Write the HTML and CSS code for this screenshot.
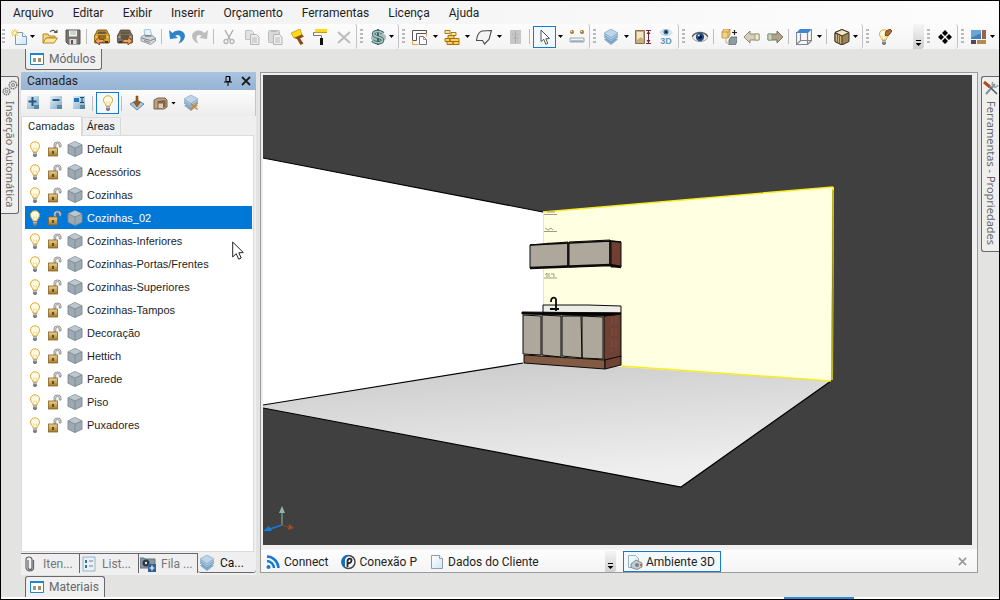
FILE: index.html
```html
<!DOCTYPE html>
<html lang="pt">
<head>
<meta charset="utf-8">
<title>Ambiente 3D</title>
<link rel="stylesheet" href="styles.css">
</head>
<body>
<svg class="sprite" aria-hidden="true">
  <defs>
    <linearGradient id="gold" x1="0" y1="0" x2="0" y2="1"><stop offset="0" stop-color="#ecd28e"/><stop offset="1" stop-color="#a67a2c"/></linearGradient>
    <linearGradient id="paper" x1="0" y1="0" x2="1" y2="1"><stop offset="0" stop-color="#fff"/><stop offset="1" stop-color="#cfe6f5"/></linearGradient>
    <linearGradient id="tile" x1="0" y1="0" x2="1" y2="1"><stop offset="0" stop-color="#e4f0f6"/><stop offset="1" stop-color="#7fa8c4"/></linearGradient>
  </defs>
  <symbol id="i-new" viewBox="0 0 16 16"><path d="M4.500 3.500h7l4 4v8h-11z" fill="url(#paper)" stroke="#7d9bb5"/><path d="M11.500 3.500v4h4" fill="#fff" stroke="#7d9bb5"/><path d="M4 0v8M0 4h8M1 1l6 6M7 1L1 7" stroke="#e8bf35"/><circle cx="4" cy="4" r="1.500" fill="#fff6b8"/></symbol>
  <symbol id="i-open" viewBox="0 0 16 16"><path d="M1 14V5h5l1 2h6v2H5z" fill="#f5d684" stroke="#b98722"/><path d="M1 14l3-5h11.500l-3.500 5z" fill="#fbe7a4" stroke="#b98722"/><path d="M8 3c2-2.500 5-2 6 1" fill="none" stroke="#555" stroke-width="1.200"/><path d="M11.500 4h4V.500z" fill="#555"/></symbol>
  <symbol id="i-save" viewBox="0 0 16 16"><path d="M1 1h14v14H3l-2-2z" fill="#77716e" stroke="#5b5553"/><path d="M4 1.500h8v6H4z" fill="#eef1ef"/><path d="M5 3h6M5 5h6" stroke="#a8b7ae"/><path d="M4.500 10h7v5h-7z" fill="#ddd"/><path d="M6 11h2v4H6z" fill="#555"/></symbol>
  <symbol id="i-car" viewBox="0 0 16 16"><path d="M3.500 1h9l2 4 1.500 2v5l-1 2H1l-1-2V7l1.500-2z" fill="currentColor" stroke="#4c3a12" stroke-width=".8"/><path d="M4.500 2.500h7L13 5H3z" fill="#6b5a38"/><path d="M4 7h8M4 9h8" stroke="#4b3b1d"/><path d="M1.500 8h2M12.500 8h2" stroke="#f8e1a0"/><path d="M2 12h3v2H2zM11 12h3v2h-3z" fill="#333"/></symbol>
  <symbol id="i-arl" viewBox="0 0 16 16"><path d="M1 12l4.500-4v2.500H10v3H5.500V16z" fill="#e8a467" stroke="#844516" stroke-width=".9"/></symbol>
  <symbol id="i-arr" viewBox="0 0 16 16"><path d="M15.500 12L11 8v2.500H6v3h5V16z" fill="#e8a467" stroke="#844516" stroke-width=".9"/></symbol>
  <symbol id="i-print" viewBox="0 0 16 16"><path d="M4 1l6-1 2 7H5z" fill="#e2f3fc" stroke="#8db5cf" stroke-width=".8"/><path d="M1 8l3-2 9 1 2.500 2v3l-5 3.500L1 12z" fill="#d5d7da" stroke="#888d93" stroke-width=".8"/><path d="M1.500 9l9 2.500 5-2M4 11.500l6 2" fill="none" stroke="#7c8187"/><path d="M5 7h6" stroke="#666"/></symbol>
  <symbol id="i-undo" viewBox="0 0 16 16"><path d="M0 1l1 9 8-1-2.800-2.200c2.500-1.800 5.800-.5 5.300 3.200-.2 2-2 4.500-2 4.500 6-2 8-8 5-11-3-2.800-8-2.500-11 .5z" fill="currentColor"/></symbol>
  <symbol id="i-cut" viewBox="0 0 16 16"><path d="M4 1l5.500 10M12 1L6.500 11" stroke="#aaa" stroke-width="1.300"/><circle cx="5" cy="12.500" r="2" fill="none" stroke="#b5b5b5" stroke-width="1.300"/><circle cx="11" cy="12.500" r="2" fill="none" stroke="#b5b5b5" stroke-width="1.300"/></symbol>
  <symbol id="i-copy" viewBox="0 0 16 16"><path d="M1.500 1.500h6l2 2v7h-8z" fill="#e3e3e3" stroke="#c0c0c0"/><path d="M6.500 5.500h6l2.500 2.500v7.500H6.500z" fill="#ececec" stroke="#b5b5b5"/><path d="M8 9h5M8 11h5M8 13h5" stroke="#bbb"/></symbol>
  <symbol id="i-paste" viewBox="0 0 16 16"><rect x="1.500" y="1.500" width="11" height="12" rx="1" fill="#d9d9d9" stroke="#bdbdbd"/><path d="M4 1h6v2H4z" fill="#bbb"/><path d="M6.500 5.500h6l2.500 2.500v7.500H6.500z" fill="#eee" stroke="#b5b5b5"/><path d="M8 9h5M8 11h5M8 13h5" stroke="#bbb"/></symbol>
  <symbol id="i-brush" viewBox="0 0 16 16"><path d="M1 4l9-4 2 6-8 3z" fill="#ffd91c" stroke="#c89c0a" stroke-width=".8"/><path d="M4 9l8-3.500 2 2-4 2 3.500 5-3 1.500-3.500-6z" fill="#8a4b12"/></symbol>
  <symbol id="i-roller" viewBox="0 0 16 16"><path d="M2 0h12v4H2z" fill="#ffd91c"/><path d="M2 3.500h12" stroke="#c79c12"/><path d="M2 3.500H.500v3h8V9" fill="none" stroke="#777"/><path d="M7 9h3v7H7z" fill="#111"/></symbol>
  <symbol id="i-x" viewBox="0 0 16 16"><path d="M2 3l12 11M14 3L2 14" stroke="#bcbcbc" stroke-width="2"/></symbol>
  <symbol id="i-dollar" viewBox="0 0 16 16"><path d="M3 5h11l2 2v3l-3 3H4l-3-3V8z" fill="#7da0a8" opacity=".65"/><path d="M13 4.500C11 2 4 1.500 3.500 5S12 7.500 12.500 11 5 14.500 2.500 11.500" fill="none" stroke="#3f636b" stroke-width="3.400"/><path d="M8 0v16" stroke="#3f636b" stroke-width="2"/><path d="M13 4.500C11 2 4 1.500 3.500 5S12 7.500 12.500 11 5 14.500 2.500 11.500" fill="none" stroke="#a5cbb8" stroke-width="1.600"/></symbol>
  <symbol id="i-walls" viewBox="0 0 16 16"><path d="M.500 1.500h14v3H4.500v7h-4z" fill="#fbfbfa" stroke="#565656"/><path d="M.500 11.500v4h6M14.500 4.500v3" fill="none" stroke="#eaa45c"/><path d="M7.500 7.500h4l3 3v5h-7z" fill="#fff" stroke="#76737c"/><path d="M11.500 7.500v3h3" fill="none" stroke="#9a98a4"/></symbol>
  <symbol id="i-bricks" viewBox="0 0 16 16"><path d="M1 1.500h5v3H1zM7 3.500h5v3H7z" fill="#fae7ac" stroke="#ad7a13"/><path d="M4 6.500h6v3H4zM1 9.500h5v3H1zM6 9.500h9v3H6zM3 12.500h6v3H3zM9 12.500h6v3H9z" fill="#f6cf67" stroke="#a8700d"/></symbol>
  <symbol id="i-poly" viewBox="0 0 16 16"><path d="M.500 11.500C1 6 3 3 6 2l9.500-.5-2.500 9-4.500 4.500-2-3.500z" fill="#f4f4f4" stroke="#4c4c4c" stroke-width="1.100"/></symbol>
  <symbol id="i-panel" viewBox="0 0 16 16"><path d="M2 1h11v14H2z" fill="#c7c7c7"/><path d="M7.500 2v12M5 5l-1 1M10 5v1M5 9h5" stroke="#a9a9a9"/></symbol>
  <symbol id="i-cursor" viewBox="0 0 16 16"><path d="M4 1v11.500l2.800-2.200 2 5 2-1-2-4.500 3.700-.3z" fill="#fff" stroke="#555"/></symbol>
  <symbol id="i-ruler" viewBox="0 0 16 16"><path d="M1 9h14v4H1z" fill="#eef3f5" stroke="#9ba8b3"/><path d="M3 11v2M5 11v2M7 11v2M9 11v2M11 11v2M13 11v2" stroke="#7c8b97"/><circle cx="3" cy="3" r="2" fill="#a87429"/><circle cx="13" cy="3" r="2" fill="#a87429"/><circle cx="2.500" cy="2.500" r=".8" fill="#ffe6a6"/><circle cx="12.500" cy="2.500" r=".8" fill="#ffe6a6"/></symbol>
  <symbol id="i-layers" viewBox="0 0 16 16"><path d="M8 7l7 3.500L8 16l-7-5.500z" fill="#83a9cb"/><path d="M8 4.500L15 8l-7 5L1 8z" fill="#9fc0dc" stroke="#668fae" stroke-width=".6"/><path d="M8 2l7 4-7 5-7-5z" fill="#abc9e2" stroke="#6d96b5" stroke-width=".6"/><path d="M8 0l7 4-7 4.500L1 4z" fill="#bed6e9" stroke="#769cba" stroke-width=".6"/></symbol>
  <symbol id="i-height" viewBox="0 0 16 16"><path d="M.500 1.500h9v13h-9z" fill="#c6ae7c" stroke="#88714a"/><path d="M2 3h6v7l-2-2-4 3z" fill="#f1e7c9"/><path d="M11 1.500h5M11 14.500h5M13.500 2v12" stroke="#75283c"/><path d="M11.500 5l2-3 2 3zM11.500 11l2 3 2-3z" fill="#75283c"/></symbol>
  <symbol id="i-eye" viewBox="0 0 16 16"><path d="M0 8.500C3 2.500 12.500 2 16 8.500 12 14 4 14 0 8.500z" fill="#f1f1f1" stroke="#999"/><path d="M0 8C3 2 13 2 16 8" fill="none" stroke="#666" stroke-width="1.500"/><circle cx="8" cy="8" r="4.200" fill="#27518d"/><circle cx="8" cy="8" r="2" fill="#091329"/><circle cx="6.800" cy="6.500" r="1" fill="#e4efff"/></symbol>
  <symbol id="i-boxes" viewBox="0 0 16 16"><path d="M1 3l2-3h6v6L7 9H1z" fill="#f5d284" stroke="#b48c3b" stroke-width=".8"/><path d="M1 3h6v6M7 3l2-3" fill="none" stroke="#b48c3b" stroke-width=".8"/><path d="M8 11l2-3h6v5l-2 3H8z" fill="#8d9ba4" stroke="#59646c" stroke-width=".8"/><path d="M13.500 1v5M11 3.500h5" stroke="#222" stroke-width="1.200"/><path d="M5 10v4h3" fill="none" stroke="#c2ac83"/></symbol>
  <symbol id="i-al" viewBox="0 0 16 16"><path d="M0 8l6-6v3h9v6H6v3z" fill="#d4cfb6" stroke="#858169" stroke-width=".9"/><path d="M11 5h4v6h-4z" fill="#f2edc8" stroke="#98937a" stroke-width=".8"/></symbol>
  <symbol id="i-ar" viewBox="0 0 16 16"><path d="M16 8l-6-6v3H1v6h9v3z" fill="#b0a388" stroke="#716955" stroke-width=".9"/><path d="M1 5h4v6H1z" fill="#c9d7c1" stroke="#83947e" stroke-width=".8"/></symbol>
  <symbol id="i-wire" viewBox="0 0 16 16"><path d="M.500 3.500h11v12H.500zM.500 15.500l4-4h11v-11M11.500 15.500l4-4M4.500 11.500v-7" fill="none" stroke="#858493" stroke-width="1.200"/><path d="M0 4l4-4h12l-4 4z" fill="#3d87d2"/></symbol>
  <symbol id="i-wood" viewBox="0 0 16 16"><path d="M8 .500L15 3.500v9L8 16l-7-3.500v-9z" fill="#9c8358" stroke="#3e3426"/><path d="M8 .500L15 3.500 8 7 1 3.500z" fill="#f1e5bf" stroke="#3e3426"/><path d="M1 4l7 3v9l-7-3.500z" fill="#c9b17f" stroke="#3e3426"/><path d="M3.500 6v7M5.500 7v7" stroke="#796340"/></symbol>
  <symbol id="i-bulb" viewBox="0 0 16 16"><path d="M6 11C6 9 3.500 8 3.500 5a4.500 4.200 0 0 1 9 0c0 3-2.500 4-2.500 6z" fill="#fffbe2" stroke="#dfa935"/><path d="M6.500 10V6.500L8 8l1.500-1.500V10" fill="none" stroke="#f5dc98" stroke-width=".8"/><path d="M6 11.500h4v3L9 16H7l-1-1.500z" fill="#7e7c82"/><path d="M6 12.700h4" stroke="#ddd" stroke-width=".8"/></symbol>
  <symbol id="i-pen" viewBox="0 0 16 16"><path d="M9 6l1-4 4-2 2 2-3 4-3 1z" fill="#b56a2c" stroke="#55331b" stroke-width=".8"/></symbol>
  <symbol id="i-dots" viewBox="0 0 16 16"><path d="M8 1l3 3-3 3-3-3zM8 9l3 3-3 3-3-3zM4 5l3 3-3 3-3-3zM12 5l3 3-3 3-3-3z"/></symbol>
  <symbol id="i-mats" viewBox="0 0 16 16"><path d="M0 1h10v9H0z" fill="#3d80bb"/><path d="M0 1h10v3L0 9z" fill="#69a5d6"/><path d="M11 1h4v9h-4z" fill="#98644c"/><path d="M0 11h5v4H0z" fill="#494c59"/><path d="M6 11h9v4H6z" fill="#b9884b"/></symbol>
  <symbol id="i-win" viewBox="0 0 14 14"><path d="M.500 1.500h13v11H.500z" fill="#fff" stroke="#2383d1"/><path d="M0 1h14v2H0z" fill="#2383d1"/><path d="M3 6h3v4H3z" fill="#8da08e"/><path d="M8 6h3v4H8z" fill="#a48c65"/></symbol>
  <symbol id="i-add" viewBox="0 0 16 16"><path d="M2 1h12v13H2z" fill="url(#tile)"/><path d="M7.500 2v9M3.500 6.500h8" stroke="#255984" stroke-width="2"/><path d="M9 10h5v4H9z" fill="#5b87a7"/></symbol>
  <symbol id="i-sub" viewBox="0 0 16 16"><path d="M2 1h12v13H2z" fill="url(#tile)"/><path d="M4.500 5h7" stroke="#255984" stroke-width="2"/><path d="M9 10h5v4H9z" fill="#5b87a7"/></symbol>
  <symbol id="i-ren" viewBox="0 0 16 16"><path d="M2 1h12v13H2z" fill="url(#tile)"/><path d="M3 3h5v4H3z" fill="#2675b5"/><path d="M9 2.500h4M11 2.500v5M9 7.500h4" stroke="#1c4770"/><path d="M9 10h5v4H9z" fill="#5b87a7"/></symbol>
  <symbol id="i-down" viewBox="0 0 16 16"><path d="M8 5l7 4-7 6-7-6z" fill="#a9c5d9" stroke="#638ba8"/><path d="M7 1h2v6h2.500L8 12 4.500 7H7z" fill="#a65c17" stroke="#6c3c14" stroke-width=".5"/></symbol>
  <symbol id="i-box" viewBox="0 0 16 16"><path d="M2 5l4-2h7l2 2v7l-3 2H2z" fill="#bda180" stroke="#77634d"/><path d="M5.500 6l8-1v7l-8 2z" fill="#826147"/><path d="M6.500 8.500H11V13H6.500z" fill="#d9cdb9"/></symbol>
  <symbol id="i-badx" viewBox="0 0 16 16"><path d="M7.500 8.500l7 6M14.500 8l-7 7" stroke="#d5882e" stroke-width="1.500"/></symbol>
  <symbol id="i-lock" viewBox="0 0 16 16"><path d="M7 7V3.500a3.500 2.500 0 0 1 7 0V6h-1.800V3.800a1.700 1.200 0 0 0-3.400 0V7z" fill="#ddd" stroke="#85817c" stroke-width=".8"/><rect x="1.500" y="7" width="9" height="8" fill="url(#gold)" stroke="#886323" stroke-width=".8"/><path d="M5 10h2v3H5z" fill="#634b22"/></symbol>
  <symbol id="i-cube" viewBox="0 0 16 16"><path d="M8 .500l7 3.300v8.400l-7 3.300-7-3.300V3.800z" fill="#9daab3" stroke="#7c8a94" stroke-width=".9"/><path d="M8 .800l6.500 3L8 7 1.500 3.800z" fill="#bdc7cc"/><path d="M8 7v8.500M1 3.800L8 7l7-3.200" fill="none" stroke="#7c8a94" stroke-width=".9"/></symbol>
  <symbol id="i-clip" viewBox="0 0 16 16"><path d="M6 4v7.500a2 2 0 0 0 4 0V3.500a3 2.500 0 0 0-6 0V12a4 3.500 0 0 0 7.500 1V4" fill="none" stroke="#64636a" stroke-width="1.200"/></symbol>
  <symbol id="i-list" viewBox="0 0 16 16"><path d="M2 1h12v14H2z" fill="#e6f2f8" stroke="#93b5c8"/><path d="M4 4h2v3H4zM4 9h2v3H4z" fill="#36729c"/><path d="M8 5h4M8 10h4" stroke="#8a7b72"/></symbol>
  <symbol id="i-cam" viewBox="0 0 16 16"><path d="M0 2h4l1 1h10v9H0z" fill="#87969f" stroke="#66757d"/><circle cx="6" cy="7" r="3.500" fill="#283746"/><circle cx="6" cy="7" r="1.200" fill="#f2d6d6"/><path d="M8 8h8v8H8z" fill="#315f95"/><path d="M12 9.500v5M9.500 12h5" stroke="#fff" stroke-width="1.200"/></symbol>
  <symbol id="i-rss" viewBox="0 0 16 16"><circle cx="3.500" cy="13" r="2" fill="#167bd0"/><path d="M2 7a7.500 7.500 0 0 1 7 7M2 2.500A12 12 0 0 1 13.500 14" fill="none" stroke="#167bd0" stroke-width="2.500"/></symbol>
  <symbol id="i-p" viewBox="0 0 16 16"><circle cx="8.500" cy="8" r="6.500" fill="#f7f7f7" stroke="#49474b" stroke-width="1.500"/><path d="M10 1.500C6 0 1.500 3 1.500 8c0 3 1.500 5 3.500 6V5.500C6 3 8 2 10 1.500z" fill="#136fc1"/><path d="M7.500 13V7c.500-3 4.500-3 4-0.500s-2.500 3.500-4 2" fill="none" stroke="#29282b" stroke-width="1.800"/></symbol>
  <symbol id="i-doc" viewBox="0 0 16 16"><path d="M2.500 1.500h8l3 3v10h-11z" fill="url(#paper)" stroke="#8b9fb0"/><path d="M10.500 1.500v3h3" fill="#fff" stroke="#8b9fb0"/></symbol>
  <symbol id="i-env" viewBox="0 0 16 16"><path d="M1.500 1.500h7l3 3v9h-10z" fill="url(#paper)" stroke="#8fb3cf"/><path d="M4 10l5-4 6 3v4l-5 2.500-6-2z" fill="#c8cbcd" stroke="#73787b" stroke-width=".8"/><circle cx="10" cy="11" r="2" fill="#77838a"/><path d="M13 10h2v2h-2z" fill="#c36c2b"/></symbol>
  <symbol id="i-gears" viewBox="0 0 16 16"><g fill="none" stroke="#77757a"><circle cx="11" cy="5" r="3.800" stroke-dasharray="1.500 .7" stroke-width="1.500"/><circle cx="11" cy="5" r="1.500"/><circle cx="4.500" cy="11.500" r="3.300" stroke-dasharray="1.500 .7" stroke-width="1.500"/><circle cx="4.500" cy="11.500" r="1.200"/></g></symbol>
  <symbol id="i-tools" viewBox="0 0 16 16"><path d="M3 14L12 4" stroke="#7f929f" stroke-width="2"/><path d="M10 2a3 3 0 1 0 5 3" fill="none" stroke="#8fa1ac" stroke-width="1.500"/><path d="M1 2l6 5" stroke="#a9501e" stroke-width="3"/><path d="M7 7l7 7" stroke="#4f5a61" stroke-width="1.500"/></symbol>
  <symbol id="i-pin" viewBox="0 0 10 12"><path d="M3 1.500h4v5H3zM6.500 1v6M1 7h8M5 7v4" fill="none" stroke="#000"/></symbol>
  <symbol id="i-close" viewBox="0 0 10 10"><path d="M1 1l8 8M9 1L1 9" stroke="currentColor" stroke-width="1.800"/></symbol>
</svg>

<nav class="menu">
  <a href="#">Arquivo</a><a href="#">Editar</a><a href="#">Exibir</a><a href="#">Inserir</a><a href="#">Orçamento</a><a href="#">Ferramentas</a><a href="#">Licença</a><a href="#">Ajuda</a>
</nav>

<div class="toolbar" role="toolbar" aria-label="Principal">
  <div class="group first">
    <button class="tool" aria-label="Novo"><svg><use href="#i-new"/></svg></button><button class="drop" aria-label="Mais novo"></button>
    <button class="tool" aria-label="Abrir"><svg><use href="#i-open"/></svg></button>
    <button class="tool" aria-label="Salvar"><svg><use href="#i-save"/></svg></button><i class="sep"></i>
    <button class="tool car-gold" aria-label="Importar"><svg><use href="#i-car"/><use href="#i-arl"/></svg></button>
    <button class="tool car-gray" aria-label="Exportar"><svg><use href="#i-car"/><use href="#i-arr"/></svg></button>
    <button class="tool" aria-label="Imprimir"><svg><use href="#i-print"/></svg></button><i class="sep"></i>
    <button class="tool blue" aria-label="Desfazer"><svg><use href="#i-undo"/></svg></button>
    <button class="tool gray flip" aria-label="Refazer"><svg><use href="#i-undo"/></svg></button><i class="sep"></i>
    <button class="tool" aria-label="Cortar"><svg><use href="#i-cut"/></svg></button>
    <button class="tool" aria-label="Copiar"><svg><use href="#i-copy"/></svg></button>
    <button class="tool" aria-label="Colar"><svg><use href="#i-paste"/></svg></button>
    <button class="tool" aria-label="Pincel"><svg><use href="#i-brush"/></svg></button>
    <button class="tool" aria-label="Rolo"><svg><use href="#i-roller"/></svg></button>
    <button class="tool" aria-label="Excluir"><svg><use href="#i-x"/></svg></button>
  </div>
  <div class="group">
    <button class="tool" aria-label="Preço"><svg><use href="#i-dollar"/></svg></button><button class="drop" aria-label="Mais preço"></button>
  </div>
  <div class="group">
    <button class="tool" aria-label="Paredes"><svg><use href="#i-walls"/></svg></button><button class="drop wide" aria-label="Mais paredes"></button>
    <button class="tool" aria-label="Alvenaria"><svg><use href="#i-bricks"/></svg></button><button class="drop wide" aria-label="Mais alvenaria"></button>
    <button class="tool" aria-label="Piso"><svg><use href="#i-poly"/></svg></button><button class="drop wide" aria-label="Mais piso"></button>
    <button class="tool" aria-label="Painel"><svg><use href="#i-panel"/></svg></button><i class="sep"></i>
    <button class="tool on" aria-label="Selecionar"><svg><use href="#i-cursor"/></svg></button><button class="drop wide" aria-label="Mais seleção"></button>
    <button class="tool" aria-label="Medir"><svg><use href="#i-ruler"/></svg></button>
  </div>
  <div class="group">
    <button class="tool" aria-label="Camadas"><svg><use href="#i-layers"/></svg></button><button class="drop wide" aria-label="Mais camadas"></button>
    <button class="tool" aria-label="Altura"><svg><use href="#i-height"/></svg></button>
    <button class="tool" aria-label="Vista 3D"><svg viewBox="0 0 16 16"><path d="M2 3.500c3-4.500 9-4.500 12 0-3 4-9 4-12 0z" fill="#d8e9f4" stroke="#9bb9cc" stroke-width=".6"/><circle cx="8" cy="3" r="2.500" fill="#376f9c"/><circle cx="8" cy="3" r="1" fill="#111"/><text x="8" y="15" text-anchor="middle" class="mini">3D</text></svg></button>
  </div>
  <div class="group">
    <button class="tool" aria-label="Ver"><svg><use href="#i-eye"/></svg></button><i class="sep"></i>
    <button class="tool" aria-label="Módulos"><svg><use href="#i-boxes"/></svg></button>
    <button class="tool" aria-label="Anterior"><svg><use href="#i-al"/></svg></button>
    <button class="tool" aria-label="Próximo"><svg><use href="#i-ar"/></svg></button><i class="sep"></i>
    <button class="tool" aria-label="Vista superior"><svg><use href="#i-wire"/></svg></button><button class="drop wide" aria-label="Mais vistas"></button><i class="sep"></i>
    <button class="tool" aria-label="Textura"><svg><use href="#i-wood"/></svg></button><button class="drop" aria-label="Mais texturas"></button>
  </div>
  <div class="group last-open">
    <button class="tool" aria-label="Luz"><svg><use href="#i-bulb"/><use href="#i-pen"/></svg></button>
    <button class="overflow" aria-label="Mais opções"></button>
  </div>
  <div class="group">
    <button class="tool" aria-label="Mover"><svg><use href="#i-dots"/></svg></button>
  </div>
  <div class="group fill">
    <button class="tool" aria-label="Materiais"><svg><use href="#i-mats"/></svg></button><button class="drop" aria-label="Mais materiais"></button>
  </div>
</div>

<main class="work">
  <button class="edge-tab top"><svg><use href="#i-win"/></svg>Módulos</button>
  <button class="side-tab left"><svg><use href="#i-gears"/></svg><span>Inserção Automática</span></button>

  <section class="panel">
    <header class="panel-head"><h1>Camadas</h1>
      <button aria-label="Fixar"><svg><use href="#i-pin"/></svg></button><button aria-label="Fechar"><svg><use href="#i-close"/></svg></button></header>
    <div class="panel-tools">
      <button class="tool" aria-label="Adicionar"><svg><use href="#i-add"/></svg></button>
      <button class="tool" aria-label="Remover"><svg><use href="#i-sub"/></svg></button>
      <button class="tool" aria-label="Renomear"><svg><use href="#i-ren"/></svg></button><i class="sep"></i>
      <button class="tool on" aria-label="Visível"><svg><use href="#i-bulb"/></svg></button><i class="sep"></i>
      <button class="tool" aria-label="Aplicar"><svg><use href="#i-down"/></svg></button>
      <button class="tool" aria-label="Caixa"><svg><use href="#i-box"/></svg></button><button class="drop" aria-label="Mais caixas"></button>
      <button class="tool" aria-label="Limpar"><svg><use href="#i-layers"/><use href="#i-badx"/></svg></button>
    </div>
    <div class="tabs"><button class="active">Camadas</button><button>Áreas</button></div>
    <ul class="layers">
      <li><svg><use href="#i-bulb"/></svg><svg><use href="#i-lock"/></svg><svg><use href="#i-cube"/></svg>Default</li>
      <li><svg><use href="#i-bulb"/></svg><svg><use href="#i-lock"/></svg><svg><use href="#i-cube"/></svg>Acessórios</li>
      <li><svg><use href="#i-bulb"/></svg><svg><use href="#i-lock"/></svg><svg><use href="#i-cube"/></svg>Cozinhas</li>
      <li class="selected"><svg><use href="#i-bulb"/></svg><svg><use href="#i-lock"/></svg><svg><use href="#i-cube"/></svg>Cozinhas_02</li>
      <li><svg><use href="#i-bulb"/></svg><svg><use href="#i-lock"/></svg><svg><use href="#i-cube"/></svg>Cozinhas-Inferiores</li>
      <li><svg><use href="#i-bulb"/></svg><svg><use href="#i-lock"/></svg><svg><use href="#i-cube"/></svg>Cozinhas-Portas/Frentes</li>
      <li><svg><use href="#i-bulb"/></svg><svg><use href="#i-lock"/></svg><svg><use href="#i-cube"/></svg>Cozinhas-Superiores</li>
      <li><svg><use href="#i-bulb"/></svg><svg><use href="#i-lock"/></svg><svg><use href="#i-cube"/></svg>Cozinhas-Tampos</li>
      <li><svg><use href="#i-bulb"/></svg><svg><use href="#i-lock"/></svg><svg><use href="#i-cube"/></svg>Decoração</li>
      <li><svg><use href="#i-bulb"/></svg><svg><use href="#i-lock"/></svg><svg><use href="#i-cube"/></svg>Hettich</li>
      <li><svg><use href="#i-bulb"/></svg><svg><use href="#i-lock"/></svg><svg><use href="#i-cube"/></svg>Parede</li>
      <li><svg><use href="#i-bulb"/></svg><svg><use href="#i-lock"/></svg><svg><use href="#i-cube"/></svg>Piso</li>
      <li><svg><use href="#i-bulb"/></svg><svg><use href="#i-lock"/></svg><svg><use href="#i-cube"/></svg>Puxadores</li>
    </ul>
    <div class="foot-tabs">
      <button><svg><use href="#i-clip"/></svg>Iten...</button><button><svg><use href="#i-list"/></svg>List...</button><button><svg><use href="#i-cam"/></svg>Fila ...</button><button class="active"><svg><use href="#i-layers"/></svg>Ca...</button>
    </div>
    <svg class="pointer" viewBox="0 0 12 19"><path d="M.700 1v15l3.500-3.300 2.500 5.500 2.500-1.200-2.400-5.200 4.500-.3z" fill="#fff" stroke="#222"/></svg>
  </section>

  <section class="viewer">
    <svg class="scene" viewBox="263 75 709 470" preserveAspectRatio="xMinYMin slice" role="img" aria-label="Cozinha">
      <defs><linearGradient id="floor" x1="0" y1="0" x2=".3" y2="1"><stop offset="0" stop-color="#c9c9c9"/><stop offset=".5" stop-color="#dcdcdc"/><stop offset="1" stop-color="#efefef"/></linearGradient></defs>
      <path d="M263 75h2000v1500H263z" fill="#404040"/>
      <path d="M263 158l280 54v152l-20-1-260 43z" fill="#fff"/>
      <path d="M543 212l290-25-2 194-288-17z" fill="#ffffe1"/>
      <path d="M263 405l260-42 100 4 208 14-150 106-418-79z" fill="url(#floor)"/>
      <path d="M263 158l280 54M263 405l260-42M263 408l418 79 150-106" fill="none" stroke="#000" stroke-width="1.200"/>
      <path d="M543.500 364V212" stroke="#f6ee6a"/>
      <path d="M543 212l290-25M621 366l210 15" fill="none" stroke="#f8ec24" stroke-width="1.500"/>
      <path d="M833 187l-1 193" stroke="#f8ec24" stroke-width="2"/>
      <path d="M833 190l-1 190" stroke="#4b481a" stroke-width=".6"/>
      <g stroke="#a29b83" fill="none"><path d="M544 214.500h13M547 212h8M545 228l3 2 3-2 2 2M544 231.500h13M547 243h10M545 275l2-2v4M549 273v4M551 274h3v3M544 278h13"/></g>
      <g stroke="#0b0908" stroke-linejoin="round">
        <path d="M530 245l38-3v24l-38 2zM569 242l41-2v25l-41 2z" fill="#aea79b"/>
        <path d="M611 241l10 1v25h-10z" fill="#713f32"/>
        <path d="M530 268l80-3 11 2" fill="none" stroke-width="2.500"/><path d="M530 245l80-4 11 1M568 243v24M610 240v25" fill="none" stroke-width="1.500"/>
        <path d="M543 305h45l33 1v7h-78z" fill="#eceee6"/>
        <path d="M523 315l18 1v39l-18-1zM542 315l19 1v41l-19-2zM562 316h19l1 42-20-2zM582 316l21 1v42l-21-1z" fill="#aea79b"/>
        <path d="M604 316l17-2v43l-17 3z" fill="#6f4134"/>
        <path d="M524 355l81 5v9l-81-6z" fill="#835a43"/><path d="M605 360l16-4v9l-16 4z" fill="#704434"/>
        <path d="M522 312l99 1v1l-17 2-82-2z" fill="#000"/>
        <path d="M551 302c0-6 5-5 5-2v11M550 309h9" fill="none" stroke-width="1.800"/>
      </g>
      <path d="M612 317v35M616 317v34" stroke="#915c49" stroke-dasharray="8 3" stroke-width=".6"/>
      <path d="M282 525v-12" stroke="#91b5aa"/><path d="M282 506l3 7h-6z" fill="#91b5aa"/>
      <path d="M282 525l-12 4" stroke="#167bdb" stroke-width="1.500"/><path d="M263 531l6-5 3 5z" fill="#167bdb"/>
      <path d="M282 525l6 2" stroke="#8c4b1e"/><path d="M289 524l5 4-6 2z" fill="#9b501e"/>
    </svg>
    <div class="views">
      <div class="view-list">
        <button><svg><use href="#i-rss"/></svg>Connect</button>
        <button><svg><use href="#i-p"/></svg>Conexão P</button>
        <button><svg><use href="#i-doc"/></svg>Dados do Cliente</button>
        <button class="overflow" aria-label="Mais abas"></button>
      </div>
      <button class="current"><svg><use href="#i-env"/></svg>Ambiente 3D</button>
      <button class="shut" aria-label="Fechar ambiente"><svg><use href="#i-close"/></svg></button>
    </div>
  </section>

  <button class="side-tab right"><svg><use href="#i-tools"/></svg><span>Ferramentas - Propriedades</span></button>
  <button class="edge-tab bottom"><svg><use href="#i-win"/></svg>Materiais</button>
</main>
<footer class="base"><i></i></footer>
</body>
</html>
```

FILE: styles.css
```css
* { box-sizing: border-box; }
body {
  margin: 0;
  height: 100vh;
  min-height: 500px;
  display: flex;
  flex-direction: column;
  border: 1px solid #000;
  background: #e3e3e1;
  color: #1e1e1e;
  font: 12px/16px Roboto, "Open Sans", sans-serif;
  overflow: hidden;
}
button {
  margin: 0;
  padding: 0;
  border: 0;
  background: none;
  color: inherit;
  font: inherit;
}
svg { display: block; width: 16px; height: 16px; flex: none; }
.sprite { position: absolute; width: 0; height: 0; }
.mini { font: bold 9px "Liberation Sans", sans-serif; fill: #6598bd; }

.menu {
  flex: none;
  height: 23px;
  display: flex;
  align-items: center;
  gap: 19px;
  padding: 0 12px;
  background: linear-gradient(90deg, #f0f0f0, #fdfdfd);
}
.menu a { color: inherit; text-decoration: none; }

.toolbar {
  flex: none;
  height: 25px;
  display: flex;
  background: linear-gradient(90deg, #f0f0f0, #fdfdfd);
}
.group {
  display: flex;
  align-items: center;
  padding-right: 1px;
  border-right: 1px solid #c4c4c4;
  border-radius: 3px;
  background: linear-gradient(#fcfcfc, #f4f4f4);
}
.group::before {
  content: "";
  width: 3px;
  height: 15px;
  margin: 0 3px;
  background: repeating-linear-gradient(#b9b9b9 0 2px, transparent 2px 4px);
}
.group.first::before { margin: 0 2px 0 1px; }
.group.fill { flex: 1; border-right: 0; }
.group.last-open { border-right: 0; padding-right: 0; }
.group.last-open .overflow { margin-left: 18px; }
.tool {
  width: 23px;
  height: 22px;
  flex: none;
  display: grid;
  place-items: center;
}
.tool.on { border: 1px solid #167bd0; background: #f2f8fc; }
.sep { width: 1px; height: 15px; margin: 0 3px 0 2px; flex: none; background: #bdbdbd; }
.drop { width: 8px; flex: none; }
.drop::before {
  content: "";
  display: block;
  width: 5px;
  height: 3px;
  background: #000;
  clip-path: polygon(0 0, 100% 0, 50% 100%);
}
.drop.wide { width: 9px; padding-left: 2px; }
.car-gold { color: #d9a428; }
.car-gray { color: #77706b; }
.blue { color: #2d83c9; }
.gray { color: #bdbdbd; }
.flip svg { transform: scaleX(-1); }
.overflow {
  width: 11px;
  align-self: stretch;
  display: flex;
  flex-direction: column;
  align-items: center;
  justify-content: flex-end;
  gap: 2px;
  padding-bottom: 3px;
  border-radius: 0 0 3px 0;
  background: linear-gradient(#f5f5f5, #cfcfcf);
}
.overflow::before { content: ""; width: 5px; height: 1px; background: #000; }
.overflow::after {
  content: "";
  width: 6px;
  height: 3px;
  background: #000;
  clip-path: polygon(0 0, 100% 0, 50% 100%);
}

.work {
  flex: 1;
  min-height: 0;
  display: grid;
  grid-template: 23px minmax(0, 1fr) 22px / 20px 235px minmax(0, 1fr) 21px;
}
.edge-tab {
  grid-column: 2;
  justify-self: start;
  display: flex;
  align-items: center;
  gap: 5px;
  margin-left: 4px;
  padding: 0 5px 0 4px;
  height: 21px;
  border: 1px solid #6c6570;
  background: #f0f0ef;
  color: #67676c;
}
.edge-tab svg { width: 14px; height: 14px; }
.edge-tab.top { grid-row: 1; border-top: 0; border-radius: 0 0 3px 3px; }
.edge-tab.bottom { grid-row: 3; align-self: end; border-bottom: 0; border-radius: 3px 3px 0 0; }
.side-tab {
  grid-row: 2;
  align-self: start;
  justify-self: start;
  width: 18px;
  display: flex;
  flex-direction: column;
  align-items: center;
  gap: 5px;
  margin-top: 4px;
  padding: 3px 0 6px;
  border: 1px solid #6c6570;
  background: #efefee;
  color: #67676c;
  font: 11px/16px "Noto Sans", "Open Sans", sans-serif;
}
.side-tab span { writing-mode: vertical-rl; }
.side-tab.left { grid-column: 1; border-left: 0; border-radius: 0 3px 3px 0; }
.side-tab.right { grid-column: 4; justify-self: end; border-right: 0; border-radius: 3px 0 0 3px; }

.panel {
  grid-area: 2 / 2;
  position: relative;
  display: flex;
  flex-direction: column;
  background: #efefef;
}
.panel-head {
  height: 18px;
  flex: none;
  display: flex;
  align-items: center;
  gap: 8px;
  padding: 0 5px 0 6px;
  background: linear-gradient(#a8c4e2, #97b3d3);
}
.panel-head h1 { margin: 0; flex: 1; font: inherit; }
.panel-head svg { width: 10px; height: 12px; }
.panel-tools {
  height: 26px;
  flex: none;
  display: flex;
  align-items: center;
  background: linear-gradient(#fcfcfc, #ececec);
  border-right: 1px solid #c4c4c4;
}
.tabs {
  height: 19px;
  flex: none;
  display: flex;
  align-items: flex-end;
  font-size: 11px;
}
.tabs button {
  height: 18px;
  padding: 0 5px 0 4px;
  border: 1px solid #d9d9d9;
  border-bottom: 0;
  line-height: 16px;
}
.tabs .active {
  height: 20px;
  margin-bottom: -1px;
  padding: 0 6px;
  background: #fff;
  position: relative;
  z-index: 1;
}
.layers {
  flex: 1;
  min-height: 0;
  margin: 0 2px 0 0;
  padding: 1px 1px 0 3px;
  border: 1px solid #dcdcdc;
  background: #fff;
  list-style: none;
  overflow: hidden;
}
.layers li {
  height: 23px;
  display: flex;
  align-items: center;
  gap: 4px;
  padding-left: 2px;
  font: 11px/16px "Liberation Sans", Arial, sans-serif;
}
.layers .selected { background: #0078d7; color: #fff; }
.foot-tabs {
  height: 22px;
  flex: none;
  display: flex;
  margin-top: 1px;
  color: #77757b;
}
.foot-tabs button {
  flex: 1;
  display: flex;
  align-items: center;
  gap: 5px;
  height: 20px;
  padding-left: 1px;
  border-top: 1px solid #6c6570;
  border-right: 1px solid #6c6570;
}
.foot-tabs .active {
  border: solid #6c6570;
  border-width: 0 0 1px 0;
  border-radius: 0 0 3px 3px;
  color: #111;
}
.pointer { position: absolute; left: 211px; top: 169px; width: 12px; height: 19px; }

.viewer {
  grid-area: 2 / 3;
  display: flex;
  flex-direction: column;
  margin: 0 0 2px 4px;
  padding: 2px 5px 0 2px;
  border: 1px solid #9a9a9a;
  background: #efefef;
}
.scene { width: 100%; flex: 1; height: auto; min-height: 0; }
.views {
  height: 27px;
  flex: none;
  display: flex;
  align-items: center;
  margin: 0 -5px 0 -2px;
  padding: 6px 10px 0 4px;
  background: linear-gradient(#efefef 4px, #fdfdfd 5px, #f4f4f4);
}
.view-list {
  flex: 0 0 50%;
  align-self: stretch;
  display: flex;
  align-items: center;
  gap: 12px;
}
.views button { display: flex; align-items: center; gap: 3px; }
.views .overflow { flex-direction: column; justify-content: flex-end; gap: 2px; margin-left: auto; }
.views .current {
  height: 21px;
  margin-left: 7px;
  padding: 0 5px 0 3px;
  border: 1px solid #167bd0;
  background: #f2f8fc;
}
.views .shut { margin-left: auto; color: #999; }
.views .shut svg { width: 9px; height: 9px; }

.base { flex: none; height: 2px; background: #fff; }
.base i { display: block; width: 7%; height: 2px; margin-left: 78.5%; background: #2b8be0; }
```
